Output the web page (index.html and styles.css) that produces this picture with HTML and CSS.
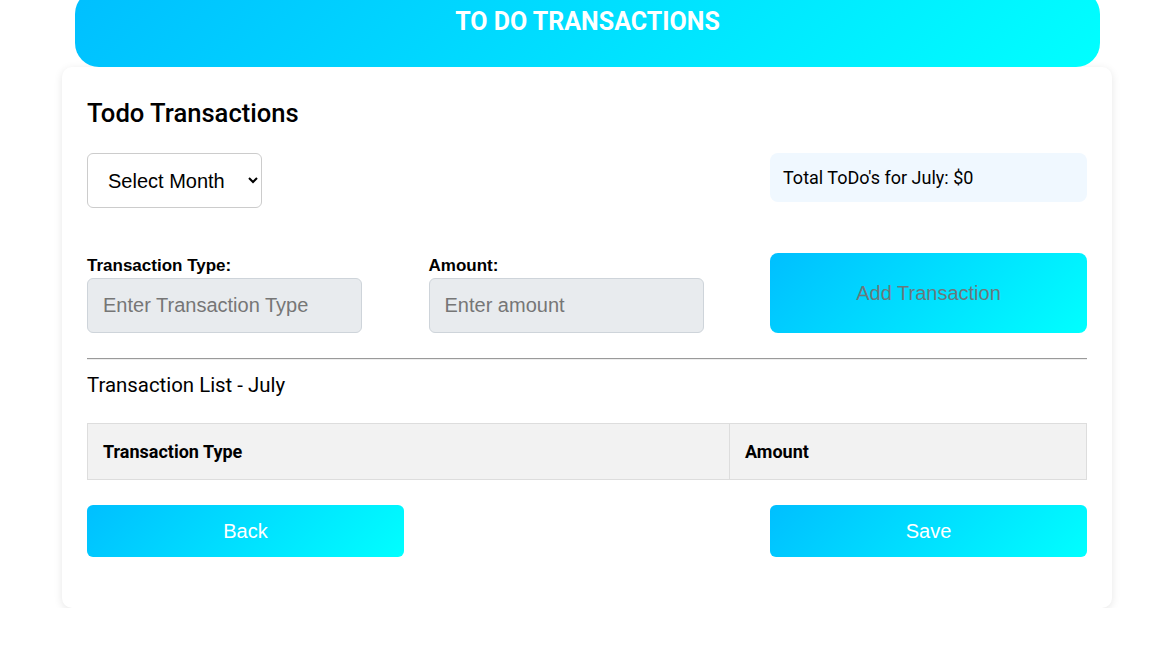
FILE: index.html
```html
<!DOCTYPE html>
<html lang="en">
<head>
<meta charset="utf-8">
<title>To Do Transactions</title>
<link rel="stylesheet" href="styles.css">
</head>
<body>
<div class="page">
  <header class="banner">
    <h1 class="banner-title">TO DO TRANSACTIONS</h1>
  </header>
  <main class="card">
    <h2 class="card-title">Todo Transactions</h2>

    <div class="grid row-top">
      <div class="cell">
        <select class="month-select">
          <option>Select Month</option>
          <option>January</option>
          <option>February</option>
          <option>March</option>
          <option>April</option>
          <option>May</option>
          <option>June</option>
          <option>July</option>
          <option>August</option>
          <option>September</option>
          <option>October</option>
          <option>November</option>
          <option>December</option>
        </select>
      </div>
      <div class="cell"></div>
      <div class="cell">
        <div class="total-box">Total ToDo's for July: $0</div>
      </div>
    </div>

    <div class="grid row-form">
      <div class="field">
        <label class="field-label">Transaction Type:</label>
        <input class="field-input" type="text" placeholder="Enter Transaction Type">
      </div>
      <div class="field">
        <label class="field-label">Amount:</label>
        <input class="field-input" type="text" placeholder="Enter amount">
      </div>
      <div class="field">
        <button class="grad-btn add-btn" type="button">Add Transaction</button>
      </div>
    </div>

    <hr class="divider">

    <p class="list-title">Transaction List - July</p>

    <table class="tx-table">
      <thead>
        <tr>
          <th class="col-type">Transaction Type</th>
          <th class="col-amount">Amount</th>
        </tr>
      </thead>
      <tbody></tbody>
    </table>

    <div class="grid row-actions">
      <button class="grad-btn action-btn" type="button">Back</button>
      <div class="cell"></div>
      <button class="grad-btn action-btn" type="button">Save</button>
    </div>
  </main>
</div>
</body>
</html>
```

FILE: styles.css
```css
html, body {
  margin: 0;
  padding: 0;
  background: #ffffff;
}

body {
  font-family: Roboto, "Liberation Sans", Arial, sans-serif;
  color: #000;
}

.page {
  width: 1050px;
  margin-left: 62px;
  margin-top: -10px;
}

.banner {
  margin: 0 12px 0 13px;
  height: 77px;
  border-radius: 24px;
  background: linear-gradient(135deg, #00bfff 0%, #00ffff 100%);
  display: flex;
  justify-content: center;
  position: relative;
  z-index: 1;
}

.banner-title {
  margin: 0;
  padding-top: 18px;
  font-family: Roboto, sans-serif;
  font-weight: 700;
  font-size: 25px;
  line-height: 28px;
  color: #ffffff;
}

.card {
  background: #ffffff;
  border-radius: 10px;
  box-shadow: 0 2px 8px rgba(0, 0, 0, 0.1);
  padding: 30px 25px 51px 25px;
}

.card-title {
  margin: 0 0 24px 0;
  font-family: Roboto, sans-serif;
  font-weight: 500;
  font-size: 25.6px;
  line-height: 32px;
}

.grid {
  display: grid;
  grid-template-columns: 317px 317px 317px;
  column-gap: 24.5px;
}

.row-top {
  align-items: start;
}

.month-select {
  width: 175px;
  height: 55px;
  padding: 0 10px 0 16px;
  border: 1px solid #cccccc;
  border-radius: 6px;
  background: #ffffff;
  font-family: "Liberation Sans", Arial, sans-serif;
  font-size: 20px;
  color: #000;
}

.total-box {
  height: 49px;
  box-sizing: border-box;
  padding: 0 13px;
  display: flex;
  align-items: center;
  background: #f0f8ff;
  border-radius: 8px;
  font-family: Roboto, sans-serif;
  font-size: 18px;
}

.row-form {
  margin-top: 45px;
  align-items: end;
}

.field {
  display: flex;
  flex-direction: column;
}

.field-label {
  font-family: "Liberation Sans", Arial, sans-serif;
  font-weight: 700;
  font-size: 17px;
  line-height: 20px;
  margin-bottom: 2px;
}

.field-input {
  width: 275px;
  height: 55px;
  box-sizing: border-box;
  padding: 0 15px;
  border: 1px solid #ced4da;
  border-radius: 6px;
  background: #e8ebee;
  font-family: "Liberation Sans", Arial, sans-serif;
  font-size: 20px;
  color: #333;
}

.field-input::placeholder {
  color: #767676;
}

.grad-btn {
  border: none;
  background: linear-gradient(135deg, #00bfff 0%, #00ffff 100%);
  font-family: "Liberation Sans", Arial, sans-serif;
  font-size: 20px;
  cursor: pointer;
}

.add-btn {
  width: 317px;
  height: 80px;
  border-radius: 8px;
  color: #6b787c;
}

.divider {
  margin: 25px 0 0 0;
  border: none;
  border-top: 1px solid #9a9a9a;
  border-bottom: 1px solid #eeeeee;
}

.list-title {
  margin: 13px 0 0 0;
  font-family: Roboto, sans-serif;
  font-size: 20.4px;
  line-height: 24px;
}

.tx-table {
  margin-top: 26px;
  width: 1000px;
  border-collapse: collapse;
}

.tx-table th {
  background: #f2f2f2;
  border: 1px solid #dddddd;
  height: 56px;
  box-sizing: border-box;
  padding: 0 15px;
  text-align: left;
  font-family: Roboto, sans-serif;
  font-weight: 700;
  font-size: 18px;
}

.col-type {
  width: 642px;
}

.row-actions {
  margin-top: 25px;
}

.action-btn {
  height: 52px;
  border-radius: 6px;
  color: #ffffff;
}
```
